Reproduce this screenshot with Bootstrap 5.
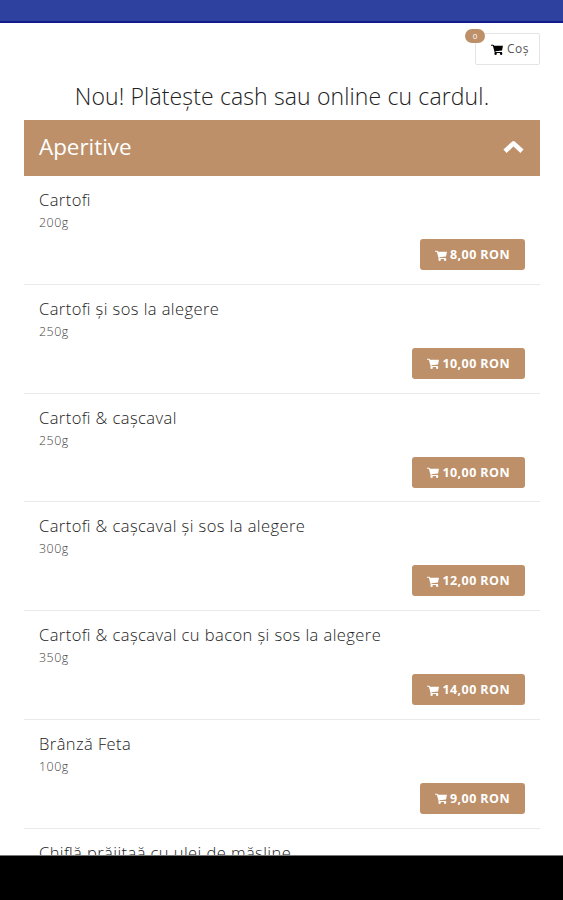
<!DOCTYPE html>
<html lang="ro">
<head>
<meta charset="utf-8">
<meta name="viewport" content="width=device-width, initial-scale=1">
<title>Aperitive</title>
<link rel="stylesheet" href="https://cdn.jsdelivr.net/npm/bootstrap@5.3.0/dist/css/bootstrap.min.css">
<style>
body{font-family:"Open Sans",sans-serif;font-weight:300;color:#222;background:#fff}
.screen{height:900px}
.status{height:23px;background:#2f419f;border-bottom:2px solid #101b8c}
.bottom{height:45px;background:#000;border-top:1px solid #777}
.page{padding:10px 23px 0 24px}
.basket{width:65px;height:32px;border:1px solid #e4e4e4;border-radius:2px;font-size:12px;letter-spacing:.5px;background:#fff;font-weight:400;color:#555;padding:0 0 0 5px}
.basket .cart{margin-top:1px}
.count{left:-11px;top:-5px;width:20px;height:14px;border-radius:7px;background:#bd9069;color:#fff;font-size:8px;letter-spacing:0;line-height:14px;font-weight:400}
.notice{font-size:23px;letter-spacing:.13px;line-height:30px;margin:16px 0 9px;white-space:nowrap}
.section-head{height:56px;background:#bd9069;padding:0 15px;font-size:22.4px;font-weight:400;color:#fff}
.section-name{margin-top:-2px}
.dish{height:108.8px;padding:13px 15px 0;border-bottom:1px solid #e9e9e9}
.dish-name{font-size:16.5px;line-height:22px;font-weight:300;letter-spacing:.43px;font-feature-settings:"liga" 1}
.dish-size{font-size:12.4px;line-height:18px;margin-top:3px;color:#444;letter-spacing:.5px}
.price{height:31px;background:#bd9069;color:#fff;border-radius:3px;font-size:12.5px;font-weight:700;padding:0 15px;margin-top:7px;gap:3px;border:0;line-height:31px;letter-spacing:.42px}
.cart{width:12px;height:11px;fill:currentColor;flex:none}
.price .cart{margin-top:1px}
</style>
<script src="https://cdn.jsdelivr.net/npm/bootstrap@5.3.0/dist/js/bootstrap.bundle.min.js"></script>
</head>
<body>
<svg class="d-none"><symbol id="cart" viewBox="0 0 13 12"><path d="M0 .7h2.3q.6 0 .8.6l.2.6H13l-1 5.2-7.2.9.2.8h7v1.1H4.1L2 1.9H0z"/><circle cx="5" cy="10.7" r="1.3"/><circle cx="11" cy="10.7" r="1.3"/></symbol></svg>
<div class="screen d-flex flex-column overflow-hidden">
<header class="status flex-shrink-0"></header>
<main class="page flex-grow-1 overflow-hidden">
<div class="d-flex justify-content-end">
<button class="basket position-relative d-flex align-items-center justify-content-center gap-1"><svg class="cart text-black"><use href="#cart"/></svg>Coș<span class="count position-absolute text-center">0</span></button>
</div>
<h1 class="notice fw-light text-center">Nou! Plătește cash sau online cu cardul.</h1>
<section>
<div class="section-head d-flex align-items-center justify-content-between"><span class="section-name">Aperitive</span><svg width="23" height="16" viewBox="0 0 23 16"><path d="M3 11.3l8.5-7.9 8.5 7.9" fill="none" stroke="#fff" stroke-width="4.6" stroke-linejoin="round"/></svg></div>
<div class="dish"><div class="dish-name">Cartofi</div><div class="dish-size">200g</div><div class="d-flex justify-content-end"><button class="price d-flex align-items-center"><svg class="cart"><use href="#cart"/></svg>8,00 RON</button></div></div>
<div class="dish"><div class="dish-name">Cartofi și sos la alegere</div><div class="dish-size">250g</div><div class="d-flex justify-content-end"><button class="price d-flex align-items-center"><svg class="cart"><use href="#cart"/></svg>10,00 RON</button></div></div>
<div class="dish"><div class="dish-name">Cartofi &amp; cașcaval</div><div class="dish-size">250g</div><div class="d-flex justify-content-end"><button class="price d-flex align-items-center"><svg class="cart"><use href="#cart"/></svg>10,00 RON</button></div></div>
<div class="dish"><div class="dish-name">Cartofi &amp; cașcaval și sos la alegere</div><div class="dish-size">300g</div><div class="d-flex justify-content-end"><button class="price d-flex align-items-center"><svg class="cart"><use href="#cart"/></svg>12,00 RON</button></div></div>
<div class="dish"><div class="dish-name">Cartofi &amp; cașcaval cu bacon și sos la alegere</div><div class="dish-size">350g</div><div class="d-flex justify-content-end"><button class="price d-flex align-items-center"><svg class="cart"><use href="#cart"/></svg>14,00 RON</button></div></div>
<div class="dish"><div class="dish-name">Brânză Feta</div><div class="dish-size">100g</div><div class="d-flex justify-content-end"><button class="price d-flex align-items-center"><svg class="cart"><use href="#cart"/></svg>9,00 RON</button></div></div>
<div class="dish"><div class="dish-name">Chiflă prăjitaă cu ulei de măsline</div></div>
</section>
</main>
<footer class="bottom flex-shrink-0"></footer>
</div>
</body>
</html>
